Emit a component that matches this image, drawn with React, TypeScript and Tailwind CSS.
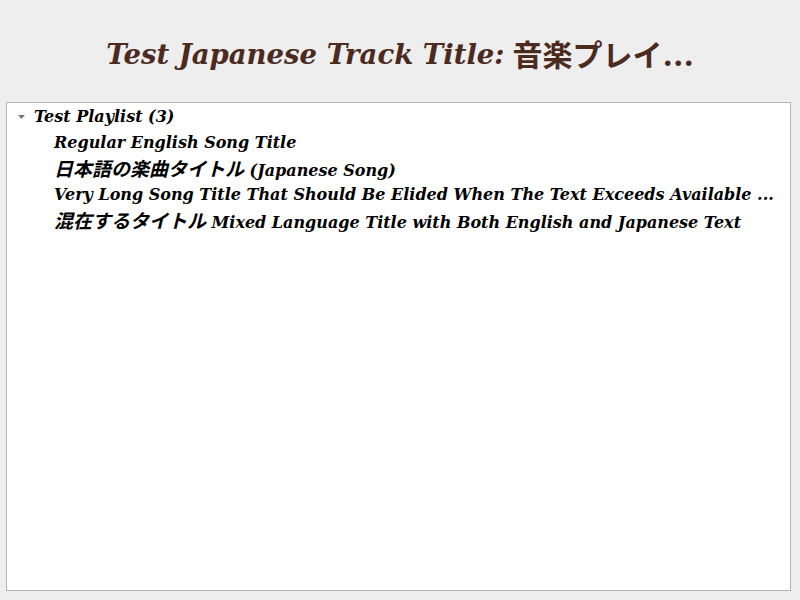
const serif = { fontFamily: '"DejaVu Serif", "Noto Sans CJK JP", serif' };

type Part = { text: string; cjk?: boolean };

const tracks: Part[][] = [
  [{ text: "Regular English Song Title" }],
  [{ text: "日本語の楽曲タイトル", cjk: true }, { text: " (Japanese Song)" }],
  [{ text: "Very Long Song Title That Should Be Elided When The Text Exceeds Available ..." }],
  [{ text: "混在するタイトル", cjk: true }, { text: " Mixed Language Title with Both English and Japanese Text" }],
];

export default function App() {
  return (
    <div className="w-[800px] h-[600px] bg-[#eeeeee] flex flex-col overflow-hidden" style={serif}>
      <h1 className="h-[102px] pt-[8px] flex items-center justify-center text-[27.5px] font-bold italic text-[#4b2a20]">
        Test Japanese Track Title: <span className="not-italic ml-[8px] text-[30px]">音楽プレイ...</span>
      </h1>
      <div className="ml-[6px] mr-[9px] h-[489px] bg-white border border-[#b4b4b4] pt-[1px] text-black text-[16px] font-bold italic">
        <div className="h-[26px] flex items-center">
          <svg width="7" height="4" viewBox="0 0 7 4" className="ml-[11px] mr-[9px]">
            <path d="M0 0 L7 0 L3.5 4 Z" fill="#777" />
          </svg>
          <span>Test Playlist (3)</span>
        </div>
        {tracks.map((parts, i) => (
          <div key={i} className="h-[26px] pl-[47px] pr-[6px] flex items-center whitespace-nowrap">
            <span>
              {parts.map((p, j) => (
                <span key={j} className={p.cjk ? "text-[19px]" : ""}>
                  {p.text}
                </span>
              ))}
            </span>
          </div>
        ))}
      </div>
    </div>
  );
}
